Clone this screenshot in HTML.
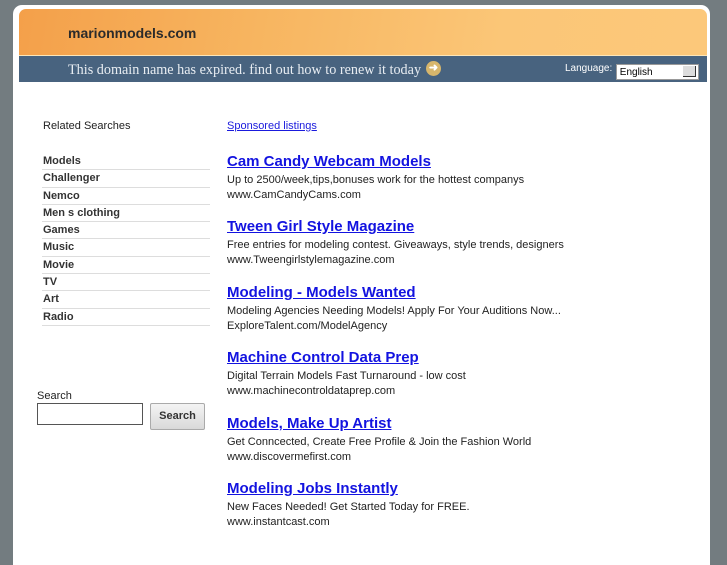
<!DOCTYPE html>
<html><head><style>
body{margin:0;background:#737c80;width:727px;height:545px;overflow:hidden;font-family:"Liberation Sans",sans-serif;}
.box{position:absolute;left:13px;top:5px;width:697px;height:560px;background:#fff;border-radius:9px 9px 0 0;}
.hdr{position:absolute;left:19px;top:9px;width:688px;height:46px;border-radius:7px 7px 0 0;background:linear-gradient(100deg,#f4a04a 0%,#f7b560 35%,#fbc677 70%,#fcc87a 100%);}
.hdr span{position:absolute;left:49px;top:16px;font-size:14px;font-weight:bold;color:#2b2b2b;}
.line{position:absolute;left:19px;top:55px;width:688px;height:1px;background:#fde6b8;}
.bar{position:absolute;left:19px;top:56px;width:688px;height:26px;background:#48637f;}
.bar .t{position:absolute;left:49px;top:6px;font-family:"Liberation Serif",serif;font-size:14.2px;color:#e8edf2;white-space:nowrap;}
.arr{position:absolute;left:407px;top:5px;width:15px;height:15px;border-radius:50%;background:#d7b66c;color:#fff;font-size:11px;line-height:15px;text-align:center;font-weight:bold;}
.lang{position:absolute;left:546px;top:7px;font-size:10px;color:#fff;}
.sel{position:absolute;left:597px;top:8px;width:81px;height:14px;background:#fff;border:1px solid #999;font-size:10px;line-height:15px;}
.sel i{position:absolute;right:2px;top:1px;width:12px;height:10px;background:#ddd;border-right:1px solid #333;border-bottom:1px solid #333;}
.rs{position:absolute;left:43px;top:120px;font-size:11px;color:#222;}
.list{position:absolute;left:42px;top:153px;width:168px;}
.list div{height:16.3px;border-bottom:1px solid #ddd;font-size:11px;font-weight:bold;color:#333;line-height:16px;padding-left:1px;}
.sl{position:absolute;left:37px;top:390px;font-size:11px;color:#222;}
.inp{position:absolute;left:37px;top:403px;width:104px;height:20px;border:1px solid #555;}
.btn{position:absolute;left:150px;top:403px;width:53px;height:25px;border:1px solid #aaa;border-radius:2px;background:linear-gradient(#f4f4f4,#d9d9d9);font-size:11px;font-weight:bold;color:#333;text-align:center;line-height:25px;}
.sp{position:absolute;left:227px;top:120px;font-size:11px;color:#1a1add;text-decoration:underline;}
.ad{position:absolute;left:227px;}
.ad a{display:block;font-size:15px;font-weight:bold;color:#1313e0;text-decoration:underline;line-height:18px;}
.ad p{margin:2px 0 0;font-size:11px;color:#222;line-height:15px;}
</style></head><body>
<div class="box"></div>
<div class="hdr"><span>marionmodels.com</span></div>
<div class="line"></div>
<div class="bar"><div class="t">This domain name has expired. find out how to renew it today</div><div class="arr">➜</div>
<div class="lang">Language:</div><div class="sel">&nbsp;English<i></i></div></div>
<div class="rs">Related Searches</div>
<div class="list"><div>Models</div><div>Challenger</div><div>Nemco</div><div>Men s clothing</div><div>Games</div><div>Music</div><div>Movie</div><div>TV</div><div>Art</div><div>Radio</div></div>
<div class="sl">Search</div><div class="inp"></div><div class="btn">Search</div>
<div class="sp">Sponsored listings</div>
<div class="ad" style="top:153px"><a>Cam Candy Webcam Models</a><p>Up to 2500/week,tips,bonuses work for the hottest companys<br>www.CamCandyCams.com</p></div>
<div class="ad" style="top:218px"><a>Tween Girl Style Magazine</a><p>Free entries for modeling contest. Giveaways, style trends, designers<br>www.Tweengirlstylemagazine.com</p></div>
<div class="ad" style="top:284px"><a>Modeling - Models Wanted</a><p>Modeling Agencies Needing Models! Apply For Your Auditions Now...<br>ExploreTalent.com/ModelAgency</p></div>
<div class="ad" style="top:349px"><a>Machine Control Data Prep</a><p>Digital Terrain Models Fast Turnaround - low cost<br>www.machinecontroldataprep.com</p></div>
<div class="ad" style="top:415px"><a>Models, Make Up Artist</a><p>Get Conncected, Create Free Profile &amp; Join the Fashion World<br>www.discovermefirst.com</p></div>
<div class="ad" style="top:480px"><a>Modeling Jobs Instantly</a><p>New Faces Needed! Get Started Today for FREE.<br>www.instantcast.com</p></div>
</body></html>
